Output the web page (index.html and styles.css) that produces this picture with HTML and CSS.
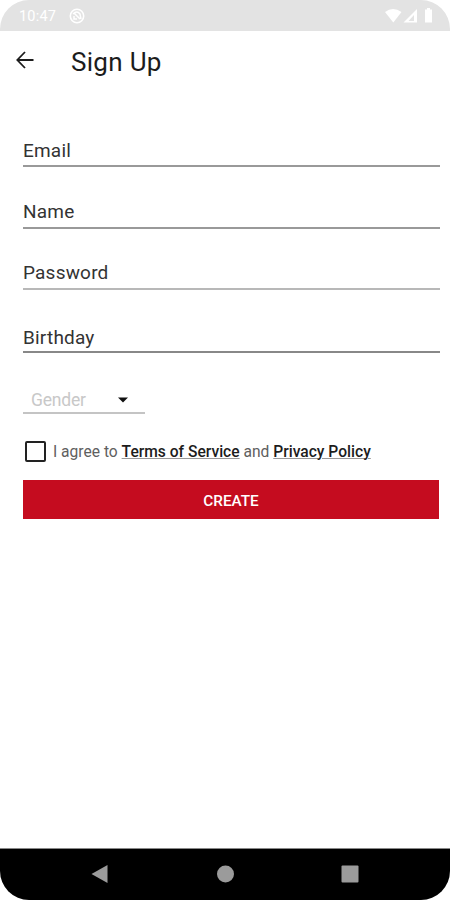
FILE: index.html
```
<!DOCTYPE html>
<html lang="en">
<head>
<meta charset="utf-8">
<title>Sign Up</title>
<link rel="stylesheet" href="styles.css">
</head>
<body>
<div class="phone">
  <div class="status">
    <span class="time">10:47</span>
    <svg class="dnd" width="16" height="16" viewBox="0 0 16 16"><circle cx="8" cy="8" r="6.700" fill="none" stroke="#fff" stroke-width="1.600"/><path d="M4 6Q8 2 11 6L12 11M5 5 11 11M5 8V11H8" fill="none" stroke="#fff" stroke-width="1.500"/></svg>
    <svg class="signals" width="50" height="16" viewBox="0 0 50 16" fill="#fff"><path d="M0 4Q8-2 16.500 4L8.300 14.500Z"/><path d="M32 1V14.500H18.500Z"/><path d="M29 7V13H23.500Z" fill="#e3e3e3"/><path d="M40 1.500h2V0h3v1.500h2v13h-7z"/></svg>
  </div>
  <header class="bar">
    <svg class="back" width="18" height="18" viewBox="0 0 18 18" fill="none" stroke="#1c1c1c" stroke-width="1.800"><path d="M17.500 9H1.500M9 1 1.300 9 9 17"/></svg>
    <h1>Sign Up</h1>
  </header>
  <form class="form">
    <div class="field email"><span>Email</span></div>
    <div class="field name"><span>Name</span></div>
    <div class="field password"><span>Password</span></div>
    <div class="field birthday"><span>Birthday</span></div>
    <div class="gender"><span>Gender</span><svg width="10" height="6" viewBox="0 0 10 6"><path d="M0 .5h10L5 5.500z"/></svg></div>
    <div class="agree"><i class="box"></i><p>I agree to <a>Terms of Service</a> and <a>Privacy Policy</a></p></div>
    <button type="button" class="create">CREATE</button>
  </form>
  <nav class="nav">
    <svg width="450" height="51" viewBox="0 0 450 51" fill="#9b9b9b"><path d="M91.500 25 107.500 16V34Z"/><circle cx="225.500" cy="25" r="8.500"/><rect x="341.500" y="16.500" width="17" height="17" rx="1"/></svg>
  </nav>
</div>
</body>
</html>
```
FILE: styles.css
```
* { box-sizing: border-box; }
body { margin: 0; background: #fff; font-family: Roboto, sans-serif; }
.phone { width: 450px; height: 900px; background: #fff; border-radius: 29px; overflow: hidden; display: flex; flex-direction: column; }
.status { height: 31px; background: #e3e3e3; display: flex; align-items: center; padding: 0 15px 0 19px; color: #fff; flex: none; }
.time { font-size: 14.500px; line-height: 30px; width: 50px; letter-spacing: 0.2px; padding-top: 2px; }
.signals { margin-left: auto; }
.bar { height: 60px; display: flex; align-items: center; padding-left: 16px; flex: none; }
.back { margin-top: -2px; }
h1 { margin: 1px 0 0 37px; font-size: 26px; font-weight: 400; line-height: 34px; letter-spacing: 0.3px; color: #1c1c1c; }
.form { padding: 0 10px 0 23px; flex: 1; }
.field { border-bottom: 2px solid #999; display: flex; align-items: flex-end; padding-bottom: 2px; font-size: 19px; line-height: 24px; letter-spacing: 0.2px; color: #333; }
.email { height: 76px; }
.name { height: 62px; padding-bottom: 3px; }
.password { height: 61px; border-color: #b8b8b8; padding-bottom: 3px; }
.birthday { height: 63px; border-color: #888; padding-bottom: 1px; }
.gender { width: 122px; height: 61px; border-bottom: 2px solid #c4c4c4; display: flex; justify-content: space-between; align-items: flex-end; padding: 0 17px 1px 8px; font-size: 17.500px; line-height: 22px; letter-spacing: -0.2px; color: #c8c8c8; }
.gender svg { margin-bottom: 8px; fill: #111; }
.agree { display: flex; align-items: center; height: 25px; margin-top: 25px; padding-left: 2px; }
.box { width: 21px; height: 21px; border: 2px solid #222; border-radius: 2px; margin-right: 7px; }
.agree p { margin: 0; font-size: 15.600px; line-height: 20px; color: #606060; white-space: pre; }
.agree a { color: #1c1c1c; font-weight: 500; text-decoration: underline; text-decoration-color: #999; text-decoration-thickness: 1px; text-underline-offset: 1px; }
.create { display: block; width: 416px; height: 39px; margin: 16px 0 0; border: 0; padding: 2px 0 0; background: #c50c1f; color: #fff; font: 500 15.300px/20px Roboto, sans-serif; }
.nav { height: 52px; background: #000; border-top: 1px solid #888; flex: none; }
.nav svg { display: block; }
```
